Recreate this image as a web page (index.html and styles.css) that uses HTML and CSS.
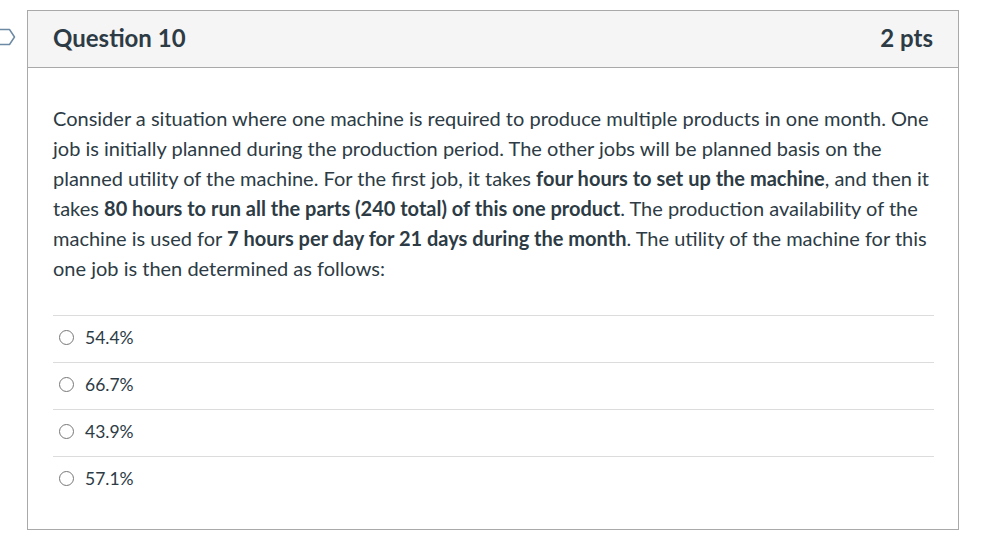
FILE: index.html
```html
<!DOCTYPE html>
<html>
<head>
<meta charset="utf-8">
<link rel="stylesheet" href="styles.css">
</head>
<body>
<div class="page">
  <svg class="flag" width="20" height="20" viewBox="0 0 20 20">
    <path d="M-6 1.5 H9.5 L14.5 9 L9.5 16.5 H-6" fill="none" stroke="#6d8aa5" stroke-width="1.5" stroke-linejoin="round"/>
  </svg>
  <div class="question">
    <div class="header">
      <h2 class="title">Question 10</h2>
      <div class="pts">2 pts</div>
    </div>
    <div class="content">
      <p class="text">Consider a situation where one machine is required to produce multiple products in one month. One job is initially planned during the production period. The other jobs will be planned basis on the planned utility of the machine. For the first job, it takes <strong>four hours to set up the machine</strong>, and then it takes <strong>80 hours to run all the parts (240 total) of this one product</strong>. The production availability of the machine is used for <strong>7 hours per day for 21 days during the month</strong>. The utility of the machine for this one job is then determined as follows:</p>
      <div class="answers">
        <label class="answer"><span class="radio"></span><span class="atext">54.4%</span></label>
        <label class="answer"><span class="radio"></span><span class="atext">66.7%</span></label>
        <label class="answer"><span class="radio"></span><span class="atext">43.9%</span></label>
        <label class="answer"><span class="radio"></span><span class="atext">57.1%</span></label>
      </div>
    </div>
  </div>
</div>
</body>
</html>
```
FILE: styles.css
```css
html, body {
  margin: 0;
  padding: 0;
  background: #fff;
}
body {
  font-family: Lato, "Liberation Sans", sans-serif;
  color: #2d3b45;
}
.page {
  position: relative;
  padding: 10px 0 0 27px;
}
.flag {
  position: absolute;
  left: 0;
  top: 28px;
}
.question {
  width: 932px;
  border: 1px solid #a9a9a9;
  height: 520px;
  box-sizing: border-box;
}
.header {
  display: flex;
  justify-content: space-between;
  align-items: center;
  height: 57px;
  box-sizing: border-box;
  padding: 0 25px 4px 25px;
  background: #f5f5f5;
  border-bottom: 1px solid #a9a9a9;
}
.title {
  margin: 0;
  font-size: 24px;
  font-weight: 700;
  color: #2d3b45;
}
.pts {
  font-size: 24px;
  font-weight: 700;
  color: #2d3b45;
}
.content {
  padding: 35px 24px 0 25px;
}
.text {
  margin: 0;
  font-size: 20px;
  line-height: 30px;
}
.text strong {
  font-weight: 700;
}
.answers {
  margin-top: 32px;
}
.answer {
  display: flex;
  align-items: center;
  height: 46px;
  box-sizing: content-box;
  border-top: 1px solid #dcdcdc;
  padding: 0 0 0 6px;
  gap: 11px;
}
.answer-inner {
  display: flex;
}
.radio {
  width: 15px;
  height: 15px;
  box-sizing: border-box;
  border: 1px solid #777;
  border-radius: 50%;
  margin-bottom: 4px;
}
.atext {
  font-size: 17.5px;
  margin-bottom: 4px;
}
```
